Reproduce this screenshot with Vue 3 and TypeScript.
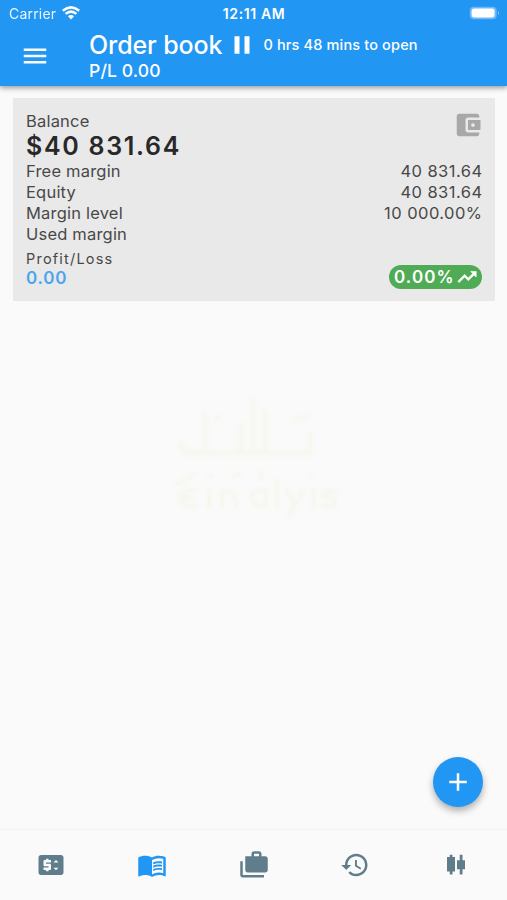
<script setup lang="ts">
import { ref } from 'vue'

interface Row {
  label: string
  value: string
}

interface Tab {
  name: string
  path: string
}

const rows: Row[] = [
  { label: 'Free margin', value: '40 831.64' },
  { label: 'Equity', value: '40 831.64' },
  { label: 'Margin level', value: '10 000.00%' },
  { label: 'Used margin', value: '' },
]

const tabs: Tab[] = [
  {
    name: 'Prices',
    path: 'M20 4H4c-1.11 0-1.99.89-1.99 2L2 18c0 1.11.89 2 2 2h16c1.11 0 2-.89 2-2V6c0-1.11-.89-2-2-2zm-8 6H8v1h3c.55 0 1 .45 1 1v3c0 .55-.45 1-1 1h-1v1H8v-1H6v-2h4v-1H7c-.55 0-1-.45-1-1V9c0-.55.45-1 1-1h1V7h2v1h2v2zm4 6.25l-2-2h4l-2 2zM14 10l2-2 2 2h-4z',
  },
  {
    name: 'Order book',
    path: 'M21 5c-1.11-.35-2.33-.5-3.5-.5-1.95 0-4.05.4-5.5 1.5-1.45-1.1-3.55-1.5-5.5-1.5S2.45 4.9 1 6v14.65c0 .25.25.5.5.5.1 0 .15-.05.25-.05C3.1 20.45 5.05 20 6.5 20c1.95 0 4.05.4 5.5 1.5 1.35-.85 3.8-1.5 5.5-1.5 1.65 0 3.35.3 4.75 1.05.1.05.15.05.25.05.25 0 .5-.25.5-.5V6c-.6-.45-1.25-.75-2-1zm0 13.5c-1.1-.35-2.3-.5-3.5-.5-1.7 0-4.15.65-5.5 1.5V8c1.35-.85 3.8-1.5 5.5-1.5 1.2 0 2.4.15 3.5.5v11.5zM17.5 10.5c.88 0 1.73.09 2.5.26V9.24c-.79-.15-1.64-.24-2.5-.24-1.7 0-3.24.29-4.5.83v1.66c1.13-.64 2.7-.99 4.5-.99zM13 12.49v1.66c1.13-.64 2.7-.99 4.5-.99.88 0 1.73.09 2.5.26V11.9c-.79-.15-1.64-.24-2.5-.24-1.7 0-3.24.3-4.5.83zM17.5 14.33c-1.7 0-3.24.29-4.5.83v1.66c1.13-.64 2.7-.99 4.5-.99.88 0 1.73.09 2.5.26v-1.52c-.79-.16-1.64-.24-2.5-.24z',
  },
  {
    name: 'Portfolio',
    path: 'M3 9H1v11c0 1.11.89 2 2 2h17v-2H3V9z M18 5V3c0-1.1-.9-2-2-2h-4c-1.1 0-2 .9-2 2v2H5v11c0 1.1.9 2 2 2h14c1.1 0 2-.9 2-2V7c0-1.1-.9-2-2-2h-3zm-6-2h4v2h-4V3z',
  },
  {
    name: 'History',
    path: 'M13 3c-4.97 0-9 4.03-9 9H1l3.89 3.89.07.14L9 12H6c0-3.87 3.13-7 7-7s7 3.13 7 7-3.13 7-7 7c-1.93 0-3.68-.79-4.94-2.06l-1.42 1.42C8.27 19.99 10.51 21 13 21c4.97 0 9-4.03 9-9s-4.03-9-9-9zm-1 5v5l4.28 2.54.72-1.21-3.5-2.08V8H12z',
  },
  {
    name: 'Charts',
    path: 'M7 3.8h2.2v1.8h2v11.6h-2v2.4H7v-2.4H4.8V5.6H7z M15 3.8h2.2v4.4h2v7.2h-2v4.2H15v-4.2h-2.2V8.2H15z',
  },
]

const active = ref(1)
</script>

<template>
  <div class="screen">
    <header class="top">
      <div class="status">
        <span class="carrier">
          <span class="carrier-name">Carrier</span>
          <svg class="wifi" viewBox="0 0 18 14">
            <path d="M.8 4.7Q9-2 17.2 4.7M3.6 7.9Q9 3.4 14.4 7.9" fill="none" stroke="#fff" stroke-width="2.5" />
            <path d="M5.9 10.3Q9 7.7 12.1 10.3L9 13.6Z" fill="#fff" />
          </svg>
        </span>
        <span class="clock">12:11 AM</span>
        <svg class="battery" viewBox="0 0 32 14">
          <rect x=".7" y=".7" width="27" height="12.6" rx="4" fill="#6cb8f8" />
          <rect x="2.6" y="2.6" width="23" height="8.8" rx="2.4" fill="#fff" />
          <path d="M29 5v4q2-2 0-4" fill="#8cc8fa" />
        </svg>
      </div>
      <div class="bar">
        <svg class="menu" viewBox="0 0 24 24"><path d="M3 18h18v-2H3v2zm0-5h18v-2H3v2zm0-7v2h18V6H3z" /></svg>
        <div class="heading">
          <div class="title-row">
            <h1 class="title">Order book</h1>
            <svg class="pause" viewBox="0 0 24 24"><path d="M6 19h4V5H6v14zm8-14v14h4V5h-4z" /></svg>
            <span class="opens">0 hrs 48 mins to open</span>
          </div>
          <div class="pl">P/L 0.00</div>
        </div>
      </div>
    </header>

    <main class="content">
      <section class="card">
        <div class="card-head">
          <div>
            <div class="label">Balance</div>
            <div class="balance">$40 831.64</div>
          </div>
          <svg class="wallet" viewBox="0 0 24 24"><path d="M21 18v1c0 1.1-.9 2-2 2H5c-1.11 0-2-.9-2-2V5c0-1.1.89-2 2-2h14c1.1 0 2 .9 2 2v1h-9c-1.11 0-2 .9-2 2v8c0 1.1.89 2 2 2h9zm-9-2h10V8H12v8zm4-2.5c-.83 0-1.5-.67-1.5-1.5s.67-1.5 1.5-1.5 1.5.67 1.5 1.5-.67 1.5-1.5 1.5z" /></svg>
        </div>
        <div v-for="row in rows" :key="row.label" class="row">
          <span class="label">{{ row.label }}</span>
          <span class="value">{{ row.value }}</span>
        </div>
        <div class="profit">
          <div>
            <div class="profit-label">Profit/Loss</div>
            <div class="profit-value">0.00</div>
          </div>
          <div class="pill">
            <span class="pill-text">0.00%</span>
            <svg class="trend" viewBox="0 0 24 24"><path d="M16 6l2.29 2.29-4.88 4.88-4-4L2 16.59 3.41 18l6-6 4 4 6.3-6.29L22 12V6z" /></svg>
          </div>
        </div>
      </section>

      <svg class="mark" viewBox="0 0 180 130">
        <g fill="none" stroke="#f7f7f1" stroke-linecap="round">
          <path d="M12 54Q14 64 26 63H142V45M37 61V25M85 61V10M97 59V22M73 59V36" stroke-width="7" />
          <path d="M127 29l14-4M48 27h3" stroke-width="5" />
          <path d="M8 95l20-11M42 86h1M66 86l6-2M93 83v5M142 86h2" stroke-width="5" />
          <path d="M26 100q-16 0-14 9 2 9 16 7M14 108h12M41 101v15M54 116v-14q14-5 14 14M98 101q-16-2-14 8 4 10 14 6v-14 15M109 92v24M119 101l8 14 8-14M127 115l-6 11M146 101v15M168 102q-14-4-12 4 14 2 11 8-5 4-12 1" stroke-width="6" />
        </g>
      </svg>

      <button class="fab" aria-label="Add">
        <svg viewBox="0 0 24 24"><path d="M19 13h-6v6h-2v-6H5v-2h6V5h2v6h6v2z" /></svg>
      </button>
    </main>

    <nav class="tabs">
      <button
        v-for="(tab, i) in tabs"
        :key="tab.name"
        class="tab"
        :class="{ active: i === active }"
        :aria-label="tab.name"
        @click="active = i"
      >
        <svg viewBox="0 0 24 24"><path :d="tab.path" /></svg>
      </button>
    </nav>
  </div>
</template>

<style>
body {
  margin: 0;
  background: #fafafa;
}
</style>

<style scoped>
.screen {
  display: flex;
  flex-direction: column;
  width: 507px;
  height: 900px;
  overflow: hidden;
  background: #fafafa;
  color: #484848;
  font-family: Inter, 'Liberation Sans', sans-serif;
}

svg {
  display: block;
  flex: none;
  fill: currentColor;
}

span,
.label,
.title,
.balance {
  white-space: nowrap;
}

.top {
  flex: none;
  height: 86px;
  background: #2196f3;
  color: #fff;
  box-shadow: 0 2px 5px rgba(0, 0, 0, 0.38);
  z-index: 1;
}

.status {
  display: grid;
  grid-template-columns: 1fr auto 1fr;
  align-items: center;
  height: 27px;
  padding: 0 6px 0 9px;
}

.carrier {
  display: flex;
  align-items: center;
  gap: 6px;
}

.carrier-name {
  font-size: 14px;
  letter-spacing: 0.2px;
  opacity: 0.9;
}

.wifi {
  width: 18px;
  height: 14px;
  margin-top: -1px;
}

.clock {
  margin-right: 2px;
  font-size: 14px;
  font-weight: 600;
  letter-spacing: 0.6px;
}

.battery {
  justify-self: end;
  width: 32px;
  height: 14px;
  margin-top: -1px;
}

.bar {
  display: flex;
  align-items: center;
  height: 57px;
}

.menu {
  width: 30px;
  height: 30px;
  margin-left: 20px;
}

.heading {
  margin-top: -2px;
  margin-left: 39px;
}

.title-row {
  display: flex;
  align-items: center;
  height: 32px;
}

.title {
  margin: 0;
  font-size: 25px;
  font-weight: 500;
  line-height: 32px;
  letter-spacing: -0.1px;
}

.pause {
  width: 30px;
  height: 30px;
  margin-left: 5px;
}

.opens {
  margin-left: 6px;
  font-size: 14.5px;
  font-weight: 500;
  letter-spacing: 0.15px;
}

.pl {
  font-size: 17.5px;
  font-weight: 500;
  line-height: 20px;
  letter-spacing: 0.15px;
}

.content {
  position: relative;
  flex: 1;
  padding: 12px 12px 0 13px;
}

.card {
  box-sizing: border-box;
  height: 203px;
  padding: 13px 13px 0;
  background: #e9e9e9;
}

.card-head {
  display: flex;
  justify-content: space-between;
  height: 50px;
}

.label,
.value {
  font-size: 16.5px;
  line-height: 20px;
}

.label {
  letter-spacing: 0.2px;
}

.value {
  letter-spacing: 0.45px;
  margin-right: -0.5px;
}

.balance {
  color: #282828;
  font-size: 25px;
  font-weight: 600;
  line-height: 31px;
  letter-spacing: 1.7px;
}

.wallet {
  width: 30px;
  height: 30px;
  margin-top: -1px;
  margin-right: -1px;
  color: #a8a8a8;
}

.row {
  display: flex;
  justify-content: space-between;
  height: 21px;
}

.profit {
  display: flex;
  justify-content: space-between;
  align-items: flex-end;
  margin-top: 4px;
}

.profit-label {
  font-size: 14.5px;
  line-height: 20px;
  letter-spacing: 1.2px;
}

.profit-value {
  color: #4ba5ef;
  font-size: 17px;
  font-weight: 600;
  line-height: 19px;
  letter-spacing: 0.8px;
}

.pill {
  display: flex;
  align-items: center;
  box-sizing: border-box;
  width: 93px;
  height: 24px;
  margin-bottom: -1px;
  padding-left: 5px;
  border-radius: 12px;
  background: #4fab55;
  color: #fff;
}

.pill-text {
  width: 62px;
  font-size: 17px;
  font-weight: 600;
  letter-spacing: 1.1px;
}

.trend {
  width: 22px;
  height: 22px;
  stroke: currentColor;
  stroke-width: 0.7px;
}

.mark {
  position: absolute;
  left: 168px;
  top: 304px;
  width: 180px;
  height: 130px;
  filter: blur(1.5px);
}

.fab {
  position: absolute;
  right: 24px;
  bottom: 22px;
  display: flex;
  align-items: center;
  justify-content: center;
  width: 50px;
  height: 50px;
  padding: 0;
  border: 0;
  border-radius: 50%;
  background: #2196f3;
  color: #fff;
  box-shadow: 0 4px 7px rgba(0, 0, 0, 0.3);
}

.fab svg {
  width: 30px;
  height: 30px;
}

.tabs {
  display: flex;
  flex: none;
  box-sizing: border-box;
  height: 71px;
  border-top: 1px solid #f3f3f3;
}

.tab {
  display: flex;
  flex: 1;
  align-items: center;
  justify-content: center;
  padding: 0 0 1px;
  border: 0;
  background: none;
  color: #607d8b;
}

.tab.active {
  color: #2196f3;
}

.tab svg {
  width: 30px;
  height: 30px;
}
</style>
